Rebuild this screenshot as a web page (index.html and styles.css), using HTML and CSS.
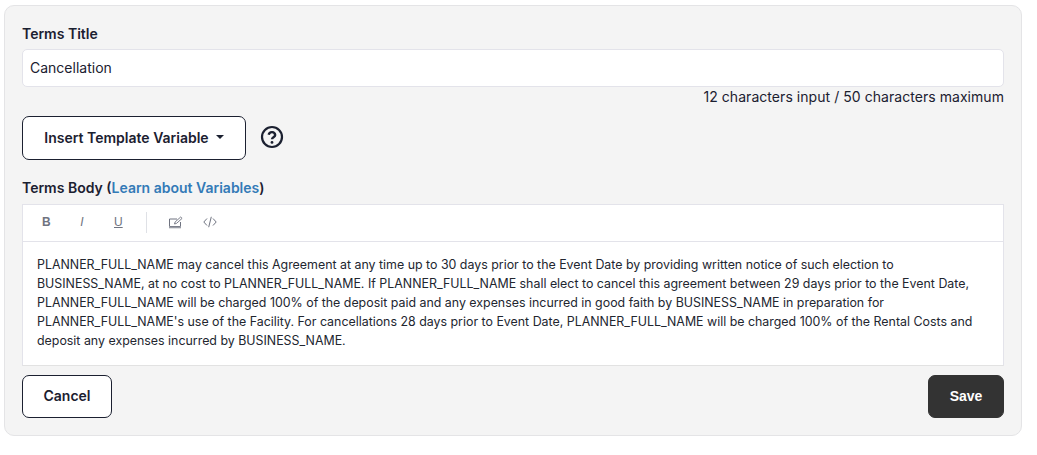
FILE: index.html
```html
<!DOCTYPE html>
<html lang="en">
<head>
<meta charset="utf-8">
<title>Terms</title>
<link rel="stylesheet" href="styles.css">
</head>
<body>
<form class="card">
  <label class="label">Terms Title</label>
  <div class="input">Cancellation</div>
  <div class="counter">12 characters input / 50 characters maximum</div>
  <div class="variable-row">
    <button type="button" class="btn btn-variable">Insert Template Variable<span class="caret"></span></button>
    <svg class="help" width="24" height="24" viewBox="0 0 24 24" fill="none"><circle cx="12" cy="12" r="10" stroke="#1b2030" stroke-width="2.2"/><path d="M8.7 9.7a3.3 3.3 0 0 1 6.5.4c0 2.1-3.2 2.3-3.2 4.1" stroke="#1b2030" stroke-width="2.4"/><circle cx="12" cy="17.4" r="1.4" fill="#1b2030"/></svg>
  </div>
  <div class="label label-body">Terms Body (<a class="link">Learn about Variables</a>)</div>
  <div class="editor">
    <div class="toolbar">
      <span class="tool tool-b">B</span>
      <span class="tool tool-i">I</span>
      <span class="tool tool-u">U</span>
      <span class="sep"></span>
      <svg class="icon-edit" width="15" height="13" viewBox="0 0 15 13" fill="none"><path d="M9 3H1.5v7.5h11V6" stroke="#6f7380"/><path d="M1 11.5h12" stroke="#9a9da6" stroke-width="1.6"/><path d="M6.5 8l.6-2 5.6-5 1.4 1.4-5.6 5z" stroke="#6f7380" stroke-width=".9"/></svg>
      <svg class="icon-code" width="14" height="12" viewBox="0 0 14 12" fill="none"><path d="M4 2.5L.8 6 4 9.5M10 2.5L13.2 6 10 9.5M8.3 .8L5.7 11.2" stroke="#6f7380"/></svg>
    </div>
    <div class="body-text">PLANNER_FULL_NAME may cancel this Agreement at any time up to 30 days prior to the Event Date by providing written notice of such election to<br>BUSINESS_NAME, at no cost to PLANNER_FULL_NAME. If PLANNER_FULL_NAME shall elect to cancel this agreement between 29 days prior to the Event Date,<br>PLANNER_FULL_NAME will be charged 100% of the deposit paid and any expenses incurred in good faith by BUSINESS_NAME in preparation for<br>PLANNER_FULL_NAME's use of the Facility. For cancellations 28 days prior to Event Date, PLANNER_FULL_NAME will be charged 100% of the Rental Costs and<br>deposit any expenses incurred by BUSINESS_NAME.</div>
  </div>
  <div class="actions">
    <button type="button" class="btn btn-cancel">Cancel</button>
    <button type="button" class="btn btn-save">Save</button>
  </div>
</form>
</body>
</html>
```
FILE: styles.css
```css
* { box-sizing: border-box; }
html, body { margin: 0; background: #fff; }
body { padding: 5px 15px 19px 4px; font-family: "Inter", "Liberation Sans", sans-serif; color: #1b2030; }
.card {
  height: 431px;
  background: #f4f4f4;
  border: 1px solid #e4e4e6;
  border-radius: 10px;
  padding: 19px 17px 0;
  display: flex;
  flex-direction: column;
}
.label { font-size: 14px; font-weight: 600; line-height: 18px; display: block; }
.input {
  margin-top: 6px;
  height: 38px;
  background: #fff;
  border: 1px solid #e3e3ea;
  border-radius: 5px;
  padding: 0 7px;
  font-size: 14px;
  line-height: 36px;
}
.counter { font-size: 14px; line-height: 18px; margin-top: 1px; text-align: right; letter-spacing: .05px; }
.variable-row { margin-top: 10px; display: flex; align-items: center; gap: 14px; }
.btn {
  font-family: inherit;
  font-size: 14px;
  font-weight: 600;
  color: #1b2030;
  background: #fff;
  border: 1px solid #1b2030;
  border-radius: 7px;
  padding: 0 0 2px;
}
.btn-variable { width: 224px; height: 44px; display: flex; align-items: center; justify-content: center; }
.caret { margin-left: 7px; border-top: 4px solid #1b2030; border-left: 4px solid transparent; border-right: 4px solid transparent; }
.help { display: block; margin-top: -3px; }
.label-body { margin-top: 19px; }
.link { color: #337ab7; }
.editor { margin-top: 7px; background: #fff; border: 1px solid #e3e3ea; border-bottom-color: #e2e2e2; }
.toolbar { height: 37px; border-bottom: 1px solid #e3e3ea; display: flex; align-items: center; padding: 0 0 2px 19px; }
.tool { font-family: "Liberation Sans", sans-serif; font-size: 12px; color: #6f7380; width: 8px; text-align: center; }
.tool-b { font-weight: 700; }
.tool-i { font-style: italic; margin-left: 28px; }
.tool-u { text-decoration: underline; margin-left: 28px; }
.sep { width: 1px; height: 21px; background: #dfe1e6; margin-left: 24px; }
.icon-edit { margin-left: 21px; }
.icon-code { margin-left: 20px; }
.body-text { height: 123px; padding: 13px 14px 0; font-size: 12.4px; line-height: 19px; color: #22262f; white-space: nowrap; }
.actions { margin-top: 9px; display: flex; justify-content: space-between; }
.btn-cancel { width: 90px; height: 43px; }
.btn-save { width: 76px; height: 43px; background: #333; border-color: #333; color: #fff; font-family: "Liberation Sans", sans-serif; font-weight: 700; }
```
